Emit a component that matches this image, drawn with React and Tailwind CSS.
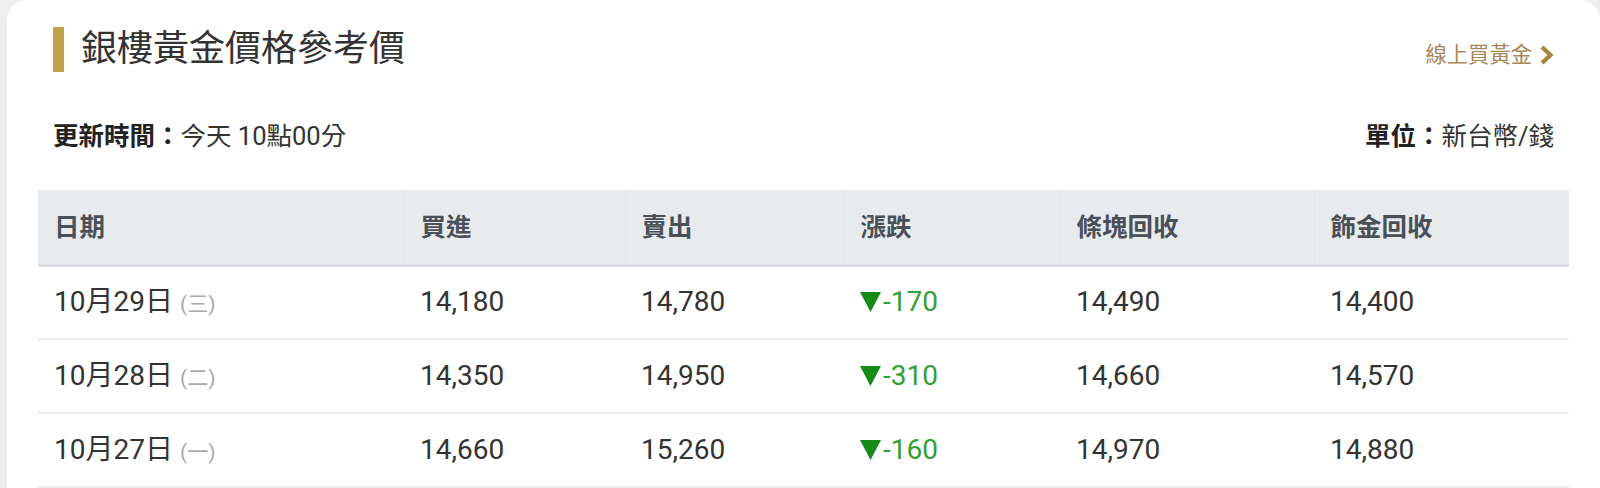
const rows = [
  { date: "10月29日", day: "三", buy: "14,180", sell: "14,780", diff: "-170", bar: "14,490", deco: "14,400" },
  { date: "10月28日", day: "二", buy: "14,350", sell: "14,950", diff: "-310", bar: "14,660", deco: "14,570" },
  { date: "10月27日", day: "一", buy: "14,660", sell: "15,260", diff: "-160", bar: "14,970", deco: "14,880" },
];

function DownArrow() {
  return (
    <svg width="21" height="20" viewBox="0 0 21 20" className="mr-[2px] inline-block">
      <path d="M0 0 H21 L10.5 20 Z" fill="#148a17" />
    </svg>
  );
}

function Chevron() {
  return (
    <svg width="15" height="22" viewBox="0 0 15 22" className="ml-[7px]">
      <path d="M3 3 L11.5 11 L3 19" fill="none" stroke="#a8843f" strokeWidth="4.2" strokeLinejoin="miter" />
    </svg>
  );
}

export default function App() {
  return (
    <div
      className="min-h-[488px] bg-[#eeeeee] pl-[7px]"
      style={{ fontFamily: 'Roboto, "Noto Sans CJK TC", "Noto Sans", sans-serif' }}
    >
      <div className="min-h-[488px] rounded-t-[20px] bg-white px-[31px] pt-[27px]">
        {/* title */}
        <div className="flex items-end justify-between px-[15px]">
          <div className="flex items-center">
            <div className="h-[45px] w-[11px] bg-[#c4a24a]" />
            <h1 className="ml-[17px] text-[36px] leading-[45px] font-normal text-[#333333]">
              銀樓黃金價格參考價
            </h1>
          </div>
          <a href="#" className="mb-[2px] flex items-center text-[21.3px] leading-[30px] text-[#a8875a]">
            線上買黃金
            <Chevron />
          </a>
        </div>

        {/* info */}
        <div className="mt-[47px] flex items-center justify-between px-[15px] text-[25.5px] leading-[34px] text-[#333333]">
          <div>
            <span className="font-bold text-[#222222]">更新時間：</span>今天 10點00分
          </div>
          <div>
            <span className="font-bold text-[#222222]">單位：</span>新台幣/錢
          </div>
        </div>

        {/* table */}
        <table className="mt-[37px] w-full table-fixed border-collapse text-left">
          <colgroup>
            <col className="w-[366px]" />
            <col className="w-[221px]" />
            <col className="w-[219px]" />
            <col className="w-[216px]" />
            <col className="w-[254px]" />
            <col />
          </colgroup>
          <thead>
            <tr className="h-[75px] border-b-[3px] border-[#dcdfe3] bg-[#e8ebee] text-[25.5px] font-bold text-[#4a5058]">
              <th className="pl-4 font-bold">日期</th>
              <th className="border-l border-[#e2e5e9] pl-4 font-bold">買進</th>
              <th className="border-l border-[#e2e5e9] pl-4 font-bold">賣出</th>
              <th className="border-l border-[#e2e5e9] pl-4 font-bold">漲跌</th>
              <th className="border-l border-[#e2e5e9] pl-4 font-bold">條塊回收</th>
              <th className="border-l border-[#e2e5e9] pl-4 font-bold">飾金回收</th>
            </tr>
          </thead>
          <tbody className="text-[28px] text-[#333333]">
            {rows.map((row) => (
              <tr key={row.date} className="h-[74px] border-b-2 border-[#ebebeb]">
                <td className="pl-4">
                  {row.date}
                  <span className="ml-[7px] text-[21px] text-[#aaaaaa]">({row.day})</span>
                </td>
                <td className="pl-4">{row.buy}</td>
                <td className="pl-4">{row.sell}</td>
                <td className="pl-4 text-[#33a033]">
                  <span className="inline-flex items-center">
                    <DownArrow />
                    {row.diff}
                  </span>
                </td>
                <td className="pl-4">{row.bar}</td>
                <td className="pl-4">{row.deco}</td>
              </tr>
            ))}
          </tbody>
        </table>
      </div>
    </div>
  );
}
